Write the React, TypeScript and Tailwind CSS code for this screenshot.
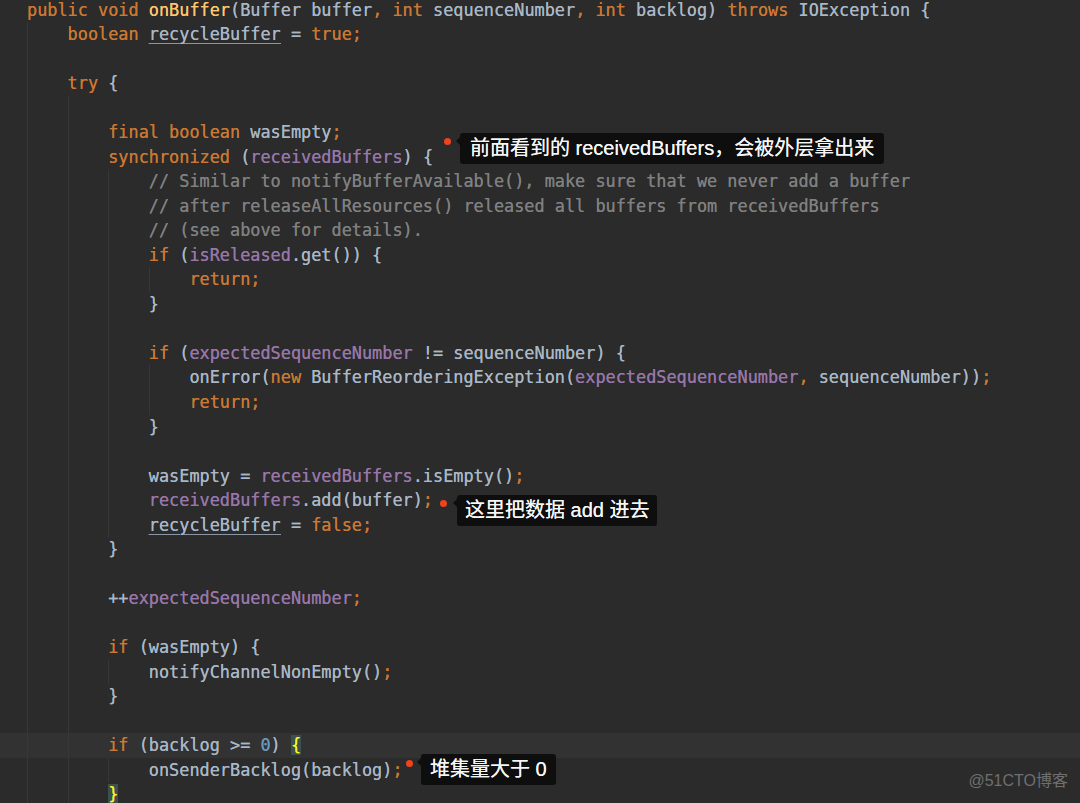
import React from "react";

type Tok = [string, string?];

const CLS: Record<string, string> = {
  p: "text-[#a9b7c6]",
  k: "text-[#cc7832]",
  m: "text-[#ffc66d]",
  f: "text-[#9876aa]",
  c: "text-[#808080]",
  n: "text-[#6897bb]",
  u: "text-[#a9b7c6] underline decoration-[#8a96a3] underline-offset-[3px] decoration-1",
  b: "text-[#ffef28] bg-[#3b514d]",
};

type Line = { g: number; t: Tok[]; hl?: boolean };

const lines: Line[] = [
  {
    g: 0,
    t: [
      ["public void", "k"],
      [" "],
      ["onBuffer", "m"],
      ["(Buffer buffer"],
      [",", "k"],
      [" "],
      ["int", "k"],
      [" sequenceNumber"],
      [",", "k"],
      [" "],
      ["int", "k"],
      [" backlog) "],
      ["throws", "k"],
      [" IOException {"],
    ],
  },
  { g: 1, t: [["boolean", "k"], [" "], ["recycleBuffer", "u"], [" = "], ["true;", "k"]] },
  { g: 1, t: [] },
  { g: 1, t: [["try", "k"], [" {"]] },
  { g: 2, t: [] },
  { g: 2, t: [["final boolean", "k"], [" wasEmpty"], [";", "k"]] },
  { g: 2, t: [["synchronized", "k"], [" ("], ["receivedBuffers", "f"], [") {"]] },
  { g: 3, t: [["// Similar to notifyBufferAvailable(), make sure that we never add a buffer", "c"]] },
  { g: 3, t: [["// after releaseAllResources() released all buffers from receivedBuffers", "c"]] },
  { g: 3, t: [["// (see above for details).", "c"]] },
  { g: 3, t: [["if", "k"], [" ("], ["isReleased", "f"], [".get()) {"]] },
  { g: 4, t: [["return;", "k"]] },
  { g: 3, t: [["}"]] },
  { g: 3, t: [] },
  { g: 3, t: [["if", "k"], [" ("], ["expectedSequenceNumber", "f"], [" != sequenceNumber) {"]] },
  {
    g: 4,
    t: [
      ["onError("],
      ["new", "k"],
      [" BufferReorderingException("],
      ["expectedSequenceNumber", "f"],
      [",", "k"],
      [" sequenceNumber))"],
      [";", "k"],
    ],
  },
  { g: 4, t: [["return;", "k"]] },
  { g: 3, t: [["}"]] },
  { g: 3, t: [] },
  { g: 3, t: [["wasEmpty = "], ["receivedBuffers", "f"], [".isEmpty()"], [";", "k"]] },
  { g: 3, t: [["receivedBuffers", "f"], [".add(buffer)"], [";", "k"]] },
  { g: 3, t: [["recycleBuffer", "u"], [" = "], ["false;", "k"]] },
  { g: 2, t: [["}"]] },
  { g: 2, t: [] },
  { g: 2, t: [["++"], ["expectedSequenceNumber", "f"], [";", "k"]] },
  { g: 2, t: [] },
  { g: 2, t: [["if", "k"], [" (wasEmpty) {"]] },
  { g: 3, t: [["notifyChannelNonEmpty()"], [";", "k"]] },
  { g: 2, t: [["}"]] },
  { g: 2, t: [] },
  { g: 2, hl: true, t: [["if", "k"], [" (backlog >= "], ["0", "n"], [") "], ["{", "b"]] },
  { g: 3, t: [["onSenderBacklog(backlog)"], [";", "k"]] },
  { g: 2, t: [["}", "b"]] },
];

function Note({
  dotLeft,
  dotTop,
  left,
  top,
  text,
  pad,
}: {
  dotLeft: number;
  dotTop: number;
  left: number;
  top: number;
  text: string;
  pad: number;
}) {
  return (
    <>
      <div
        className="absolute w-[7px] h-[7px] rounded-full bg-[#f0431d]"
        style={{ left: dotLeft, top: dotTop }}
      />
      <div
        className="absolute h-[31px] rounded-[3px] bg-[#0e0e0e] text-[20px] leading-[31px] text-[#f6f6f6] whitespace-pre font-['Liberation_Sans','Noto_Sans_CJK_SC',sans-serif]"
        style={{ left, top, paddingLeft: pad, paddingRight: pad }}
      >
        <span className="absolute left-[-4px] top-[4px] w-0 h-0 border-y-[4px] border-y-transparent border-r-[4px] border-r-[#0e0e0e]" />
        {text}
      </div>
    </>
  );
}

export default function App() {
  return (
    <div className="relative w-[1080px] h-[803px] overflow-hidden bg-[#2b2b2b] font-['DejaVu_Sans_Mono',monospace] text-[16.86px] [text-shadow:0_0_0.35px_currentColor]">
      <div className="mt-[-2.27px] flex flex-col">
        {lines.map((ln, i) => (
          <div
            key={i}
            className={
              "flex h-[24.53px] leading-[24.53px] pl-[27px] whitespace-pre " +
              (ln.hl ? "bg-[#323232]" : "")
            }
          >
            {Array.from({ length: ln.g }).map((_, j) => (
              <span key={j} className="w-[4ch] shrink-0 h-full border-l border-[#373737]" />
            ))}
            <span className="text-[#a9b7c6]">
              {ln.t.map(([s, k], j) => (
                <span key={j} className={CLS[k ?? "p"]}>
                  {s}
                </span>
              ))}
            </span>
          </div>
        ))}
      </div>

      <Note dotLeft={443.5} dotTop={138} left={460} top={133} pad={10} text="前面看到的 receivedBuffers，会被外层拿出来" />
      <Note dotLeft={439.5} dotTop={499.5} left={457} top={495} pad={8} text="这里把数据 add 进去" />
      <Note dotLeft={405.5} dotTop={759.5} left={421} top={754} pad={9} text="堆集量大于 0" />

      <div className="absolute right-[12px] bottom-[11px] text-[16px] leading-[22px] text-[#6f6f6f] [text-shadow:none] font-['Liberation_Sans','Noto_Sans_CJK_SC',sans-serif]">
        @51CTO博客
      </div>
    </div>
  );
}
